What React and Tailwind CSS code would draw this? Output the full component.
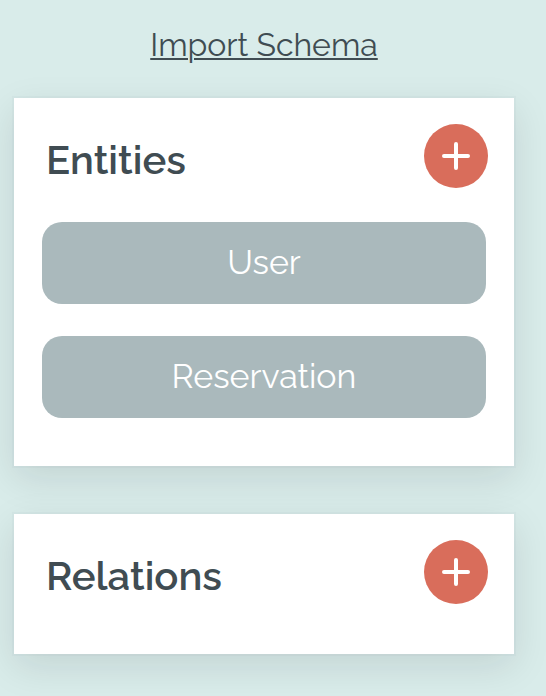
function AddButton({ label }) {
  return (
    <button aria-label={label} className="flex size-16 items-center justify-center rounded-full bg-[#d96d5b]">
      <svg className="size-8" viewBox="0 0 32 32" fill="none" stroke="white" strokeWidth="4" strokeLinecap="round">
        <path d="M4 16H28M16 4V28" />
      </svg>
    </button>
  );
}

function Card({ title, children, className }) {
  return (
    <section
      className={`ml-3.5 w-[500px] bg-white shadow-[0_0_0_2px_rgba(16,22,26,0.02),0_12px_36px_rgba(16,22,26,0.11)] ${className}`}
    >
      <header className="flex items-start justify-between pt-[26px] pr-[26px] pl-8">
        <h2 className="mt-2.5 text-[40px] leading-[52px] font-semibold whitespace-nowrap">{title}</h2>
        <AddButton label={`Add to ${title}`} />
      </header>
      {children}
    </section>
  );
}

function Entity({ name }) {
  return (
    <div className="flex h-[82px] items-center justify-center rounded-[20px] bg-[#aab9bc] pb-0.5 text-[34px] font-normal text-white">
      <span>{name}</span>
    </div>
  );
}

export default function App() {
  return (
    <main className="h-[696px] w-[546px] overflow-hidden bg-[#d9ecea] font-['Raleway','Lato',sans-serif] text-[#404c52]">
      <div className="flex h-[98px] justify-center pt-[25px] pr-[18px]">
        <a href="#" className="h-10 text-[32px] leading-10 font-normal whitespace-nowrap underline decoration-2 underline-offset-2">
          Import Schema
        </a>
      </div>
      <Card title="Entities" className="h-[368px]">
        <div className="mt-[34px] flex flex-col gap-8 px-7">
          <Entity name="User" />
          <Entity name="Reservation" />
        </div>
      </Card>
      <Card title="Relations" className="mt-12 h-[140px]" />
    </main>
  );
}
